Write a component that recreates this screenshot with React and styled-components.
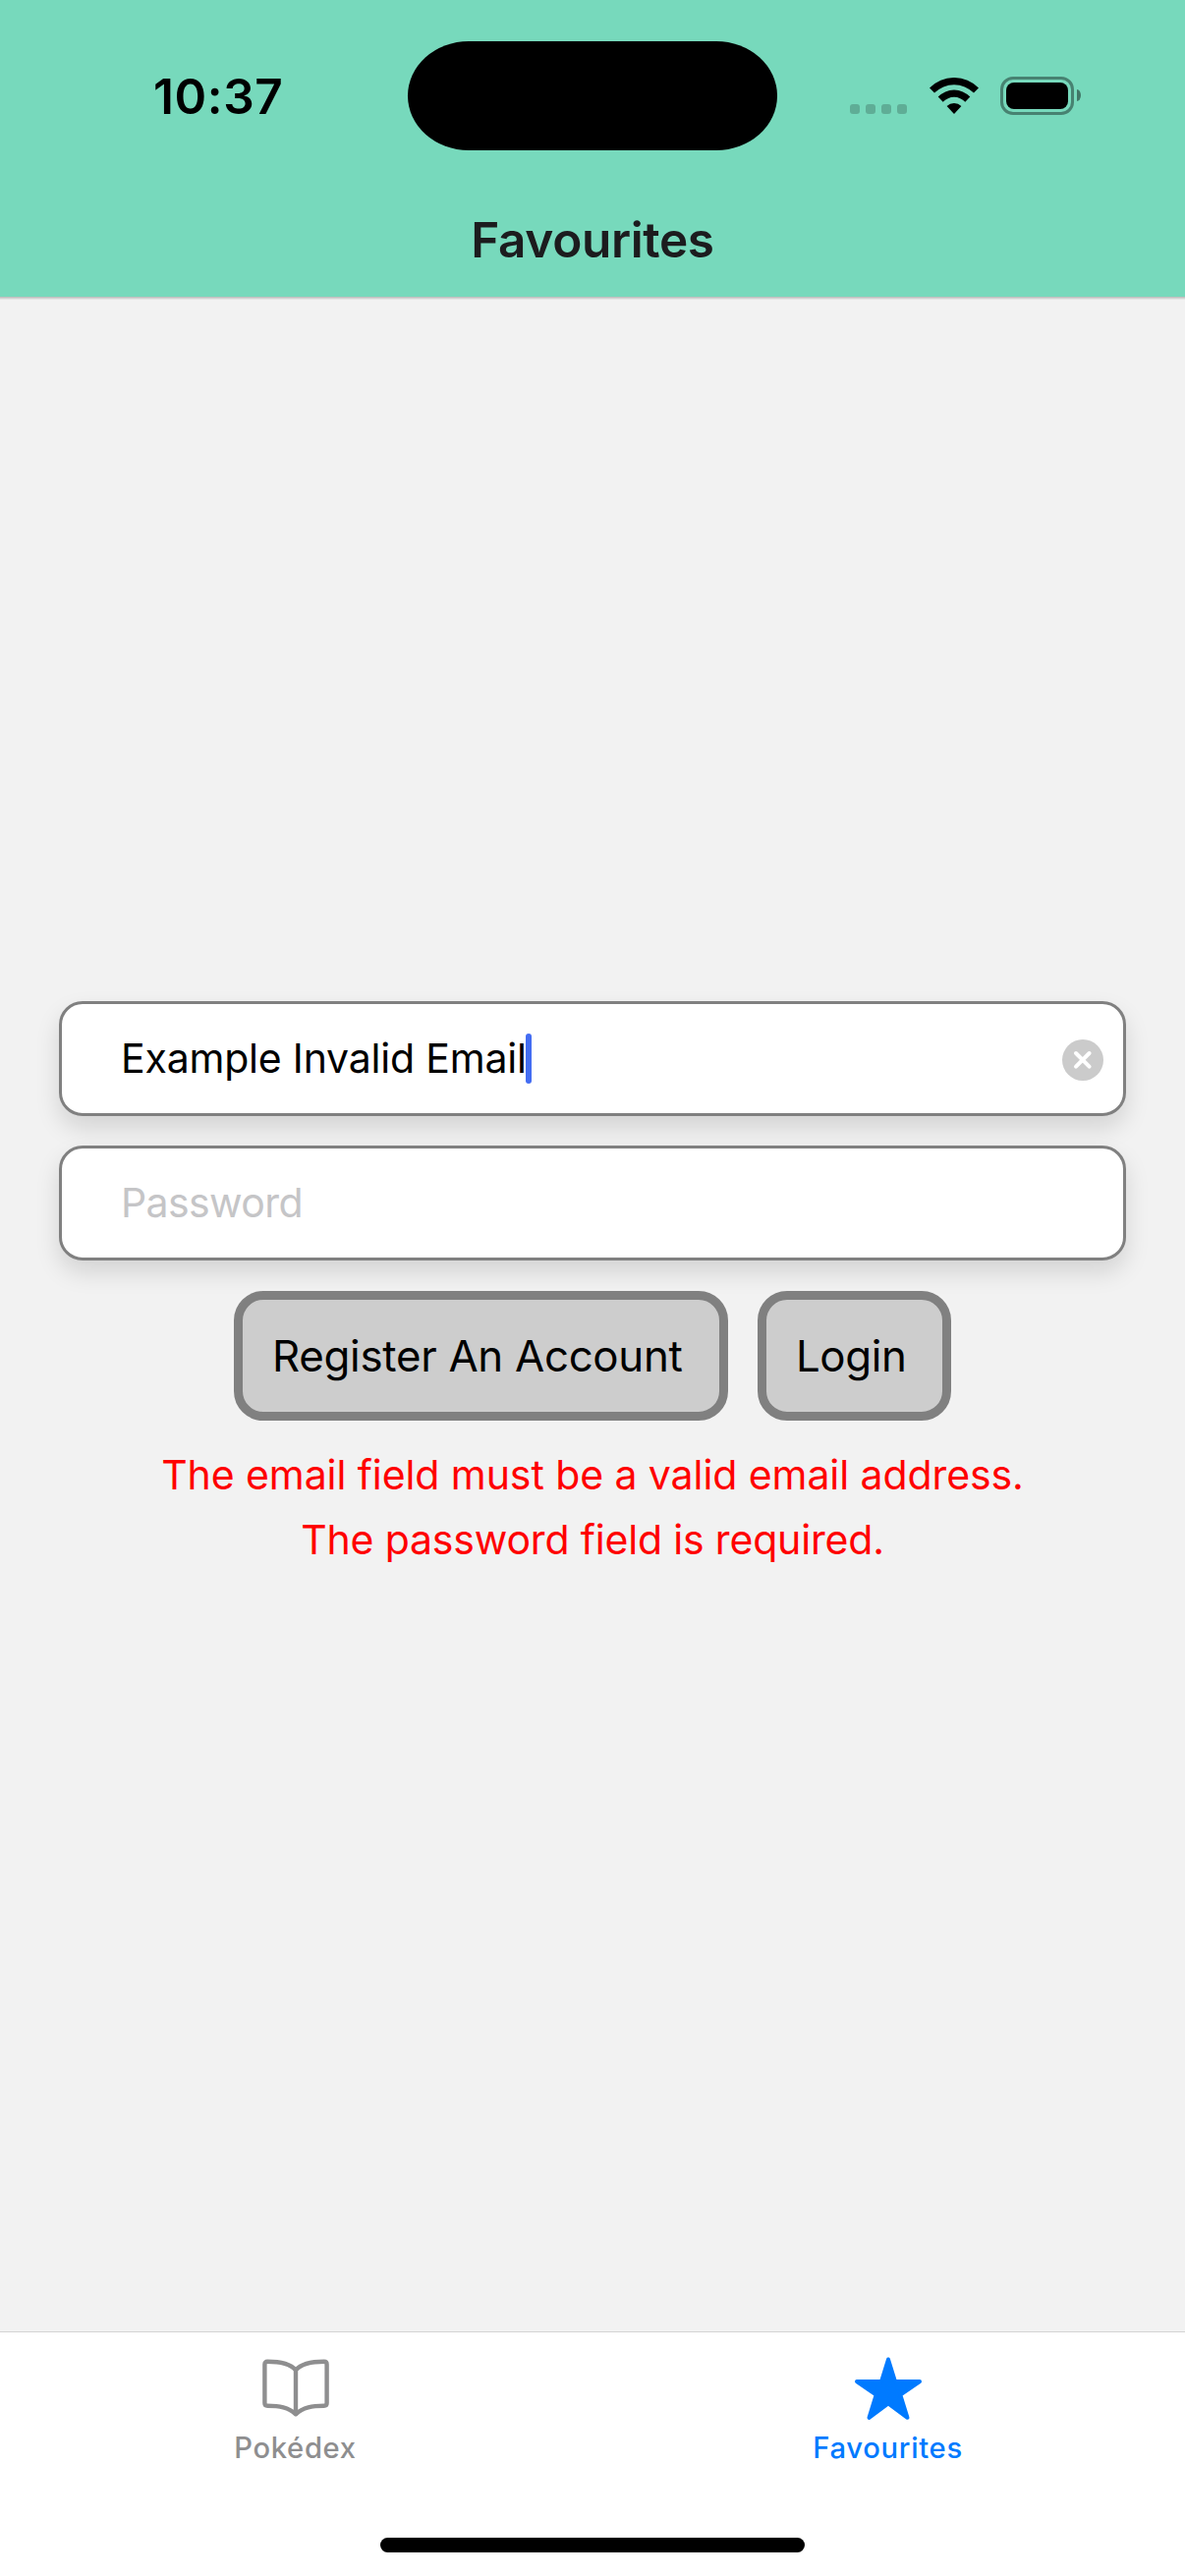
import React from "react";
import styled, { createGlobalStyle } from "styled-components";

const GlobalStyle = createGlobalStyle`
  *, *::before, *::after { box-sizing: border-box; }
  body { margin: 0; background: #f2f2f2; }
  button { margin: 0; font: inherit; cursor: pointer; }
`;

const Screen = styled.div`
  display: flex;
  flex-direction: column;
  width: 1206px;
  height: 2622px;
  background: #f2f2f2;
  font-family: Inter, "Liberation Sans", sans-serif;
  color: #000;
  overflow: hidden;
`;

const Header = styled.header`
  height: 302px;
  flex: none;
  background: #77d9bc;
  box-shadow: 0 1px 0 #c0c0c0, 0 2px 0 #d2d2d2, 0 3px 0 #e4e4e4;
`;

const StatusBar = styled.div`
  display: grid;
  grid-template-columns: 415px 376px 1fr;
  align-items: center;
  height: 186px;
  padding: 41px 0 33px;
`;

const Time = styled.time`
  padding: 2px 0 0 156px;
  font-size: 49.5px;
  line-height: 60px;
  font-weight: 600;
  letter-spacing: 0.6px;
`;

const Island = styled.div`
  height: 111px;
  border-radius: 62px / 55.5px;
  background: #000;
`;

const StatusIcons = styled.div`
  display: flex;
  align-items: center;
  padding-left: 74px;
`;

const CellularDots = styled.div`
  display: flex;
  gap: 6px;
  margin: 28px 22.500px 0 0;
`;

const Dot = styled.i`
  width: 10px;
  height: 10px;
  border-radius: 3px;
  background: rgba(0, 0, 0, 0.2);
`;

const Battery = styled.div`
  width: 75px;
  height: 39px;
  margin-left: 22.500px;
  padding: 3px;
  border: 3px solid rgba(0, 0, 0, 0.4);
  border-radius: 13px;
`;

const BatteryLevel = styled.div`
  height: 27px;
  border-radius: 8px;
  background: #000;
`;

const BatteryCap = styled.div`
  width: 4px;
  height: 12px;
  margin-left: 3px;
  border-radius: 0 4px 4px 0 / 0 6px 6px 0;
  background: rgba(0, 0, 0, 0.45);
`;

const Title = styled.h1`
  margin: 0;
  height: 116px;
  line-height: 116px;
  text-align: center;
  font-size: 49.5px;
  font-weight: 600;
  letter-spacing: -0.35px;
  color: #1c1c1e;
`;

const Main = styled.main`
  flex: 1;
  display: flex;
  flex-direction: column;
  align-items: center;
  padding: 717px 60px 0;
`;

const Field = styled.div`
  display: flex;
  align-items: center;
  width: 100%;
  height: 117px;
  margin-bottom: 30px;
  padding: 0 20px 0 60px;
  border: 3px solid #808080;
  border-radius: 24px;
  background: #fff;
  box-shadow: 0 12px 24px rgba(0, 0, 0, 0.13);
`;

const FieldText = styled.span`
  padding-bottom: 2px;
  font-size: 41px;
  line-height: 60px;
  white-space: pre;
  letter-spacing: ${(p) => p.$spacing || "0"};
  color: ${(p) => (p.$placeholder ? "#c5c5c7" : "#000")};
`;

const Caret = styled.i`
  width: 6px;
  height: 51px;
  margin-left: -1px;
  border-radius: 3px;
  background: #446df2;
`;

const ClearButton = styled.button`
  display: flex;
  width: 42px;
  height: 42px;
  margin: 3px 0 0 auto;
  padding: 0;
  border: 0;
  border-radius: 50%;
  background: #cbcbcb;
`;

const Actions = styled.div`
  display: flex;
  gap: 30px;
  margin-top: 1px;
`;

const ActionButton = styled.button`
  width: ${(p) => p.$width};
  height: 132px;
  padding: 2px 0 0 30px;
  border: 9px solid #808080;
  border-radius: 30px;
  background: #cdcdcd;
  color: #000;
  font-size: 43.8px;
  line-height: 60px;
  letter-spacing: ${(p) => p.$spacing};
  text-align: left;
  white-space: nowrap;
`;

const Errors = styled.div`
  margin-top: 22px;
`;

const ErrorText = styled.p`
  margin: 0;
  color: #f00;
  font-size: 41px;
  line-height: 66px;
  letter-spacing: ${(p) => p.$spacing};
  text-align: center;
  white-space: nowrap;
`;

const TabBar = styled.nav`
  flex: none;
  display: flex;
  flex-direction: column;
  align-items: center;
  height: 249px;
  border-top: 1px solid #d3d3d3;
  background: #fff;
`;

const Tabs = styled.div`
  display: grid;
  grid-template-columns: 1fr 1fr;
  width: 100%;
  height: 209px;
`;

const Tab = styled.a`
  display: flex;
  flex-direction: column;
  align-items: center;
  padding: 22px 1px 0 0;
  color: ${(p) => (p.$active ? "#007aff" : "#8e8e8f")};
`;

const TabLabel = styled.span`
  margin: 8px 1px 0 0;
  font-size: 29.2px;
  line-height: 36px;
  font-weight: 500;
  letter-spacing: ${(p) => p.$spacing};
`;

const HomeIndicator = styled.div`
  width: 432px;
  height: 15px;
  border-radius: 8px;
  background: #000;
`;

const WifiIcon = () => (
  <svg width="50" height="37" viewBox="0 0 50 37">
    <path d="M0 10.5A35 35 0 0 1 50 10.5L45 15.6A28 28 0 0 0 5 15.6Z" />
    <path d="M8.7 19.6A22.4 22.4 0 0 1 41.3 19.6L36.3 24.8A15.4 15.4 0 0 0 13.7 24.8Z" />
    <path d="M17.6 29A10.5 10.5 0 0 1 32.4 29L25 37Z" />
  </svg>
);

const ClearIcon = () => (
  <svg width="42" height="42" viewBox="0 0 42 42" fill="none" stroke="#fff" strokeWidth="4" strokeLinecap="round">
    <path d="M14 14L27.6 27.6M27.6 14L14 27.6" />
  </svg>
);

const BookIcon = () => (
  <svg width="74" height="70" viewBox="0 -2 74 70" fill="none" stroke="currentColor" strokeWidth="4.4" strokeLinejoin="round">
    <path d="M37 14.5C31 7.5 19 5.8 8.2 5.8Q5.4 5.8 5.4 8.6V48Q5.4 50.7 8.2 50.7C20 50.7 29.5 52 37 59.3C44.5 52 54 50.7 65.8 50.7Q68.6 50.7 68.6 48V8.6Q68.6 5.8 65.8 5.8C55 5.8 43 7.5 37 14.5V59.3" />
  </svg>
);

const StarIcon = () => (
  <svg width="72" height="70" viewBox="0 0 72 70" fill="currentColor" stroke="currentColor" strokeWidth="4" strokeLinejoin="round">
    <path d="M36 5.5L43 28H68L48.3 41.7L55.5 64.8L36 50.4L16.5 64.8L23.7 41.7L4 28H29Z" />
  </svg>
);

export default function App() {
  return (
    <>
      <GlobalStyle />
      <Screen>
        <Header>
          <StatusBar>
            <Time>10:37</Time>
            <Island />
            <StatusIcons>
              <CellularDots>
                <Dot />
                <Dot />
                <Dot />
                <Dot />
              </CellularDots>
              <WifiIcon />
              <Battery>
                <BatteryLevel />
              </Battery>
              <BatteryCap />
            </StatusIcons>
          </StatusBar>
          <Title>Favourites</Title>
        </Header>
        <Main>
          <Field>
            <FieldText $spacing="-0.2px">Example Invalid Email</FieldText>
            <Caret />
            <ClearButton aria-label="Clear text">
              <ClearIcon />
            </ClearButton>
          </Field>
          <Field>
            <FieldText $placeholder $spacing="-0.6px">Password</FieldText>
          </Field>
          <Actions>
            <ActionButton $width="503px" $spacing="-0.28px">Register An Account</ActionButton>
            <ActionButton $width="197px" $spacing="-0.4px">Login</ActionButton>
          </Actions>
          <Errors>
            <ErrorText $spacing="-0.08px">The email field must be a valid email address.</ErrorText>
            <ErrorText $spacing="-0.17px">The password field is required.</ErrorText>
          </Errors>
        </Main>
        <TabBar>
          <Tabs>
            <Tab>
              <BookIcon />
              <TabLabel $spacing="0.65px">Pokédex</TabLabel>
            </Tab>
            <Tab $active>
              <StarIcon />
              <TabLabel $spacing="0.7px">Favourites</TabLabel>
            </Tab>
          </Tabs>
          <HomeIndicator />
        </TabBar>
      </Screen>
    </>
  );
}
